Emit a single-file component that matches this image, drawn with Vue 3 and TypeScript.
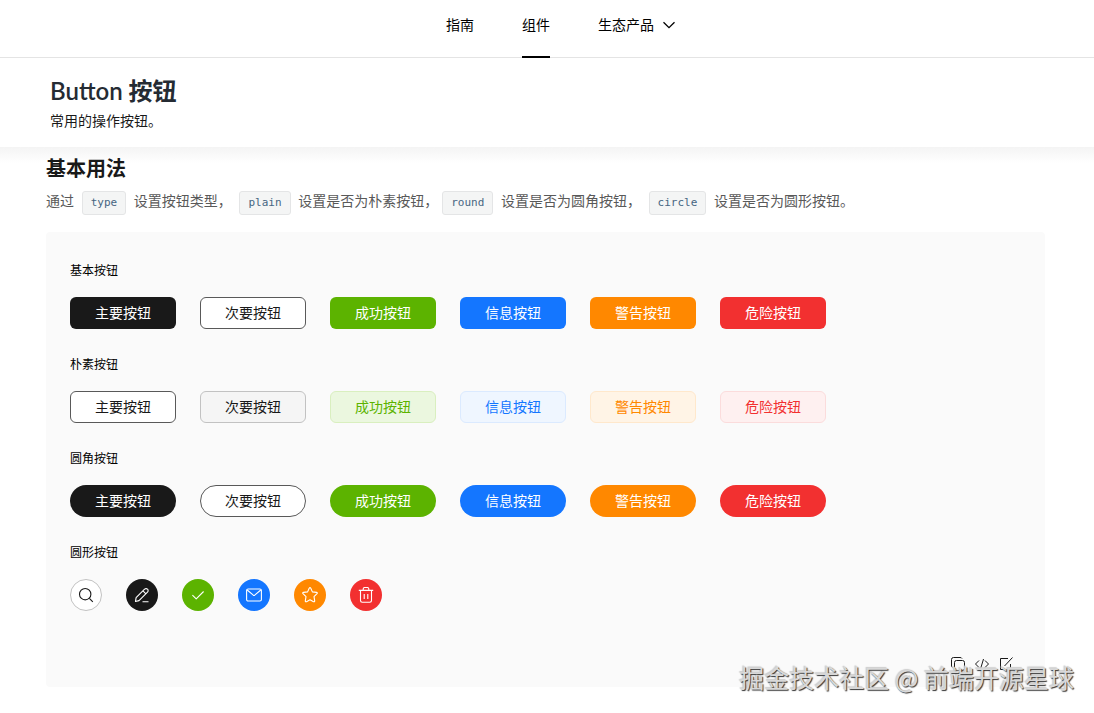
<script setup lang="ts">
type Tone = 'primary' | 'secondary' | 'success' | 'info' | 'warning' | 'danger'

interface ButtonItem {
  tone: Tone
  label: string
}

interface ButtonGroup {
  title: string
  variant: string
}

const buttons: ButtonItem[] = [
  { tone: 'primary', label: '主要按钮' },
  { tone: 'secondary', label: '次要按钮' },
  { tone: 'success', label: '成功按钮' },
  { tone: 'info', label: '信息按钮' },
  { tone: 'warning', label: '警告按钮' },
  { tone: 'danger', label: '危险按钮' },
]

const groups: ButtonGroup[] = [
  { title: '基本按钮', variant: 'solid' },
  { title: '朴素按钮', variant: 'plain' },
  { title: '圆角按钮', variant: 'solid round' },
]
</script>

<template>
  <div class="page">
    <header class="topbar">
      <nav class="nav">
        <a class="nav-link" href="#">指南</a>
        <a class="nav-link active" href="#">组件</a>
        <a class="nav-link" href="#">生态产品
          <svg class="chevron" viewBox="0 0 14 14" aria-hidden="true"><path d="M1.5 4.2 7 9.7l5.5-5.5" /></svg>
        </a>
      </nav>
    </header>

    <section class="intro">
      <h1>Button 按钮</h1>
      <p>常用的操作按钮。</p>
    </section>

    <main class="content">
      <h2>基本用法</h2>
      <p class="desc">通过 <code>type</code> 设置按钮类型， <code>plain</code> 设置是否为朴素按钮，<code>round</code> 设置是否为圆角按钮， <code>circle</code> 设置是否为圆形按钮。</p>

      <div class="demo">
        <section v-for="group in groups" :key="group.title" class="group">
          <h3>{{ group.title }}</h3>
          <div class="row">
            <button v-for="item in buttons" :key="item.tone" type="button" class="btn" :class="[item.tone, group.variant]">{{ item.label }}</button>
          </div>
        </section>

        <section class="group">
          <h3>圆形按钮</h3>
          <div class="row">
            <button type="button" class="btn circle search" aria-label="搜索">
              <svg viewBox="0 0 16 16"><circle cx="7.2" cy="7.2" r="5.7" /><path d="m11.4 11.4 3.4 3.4" /></svg>
            </button>
            <button type="button" class="btn circle solid primary" aria-label="编辑">
              <svg viewBox="0 0 16 16"><path d="m1.5 14.5.6-3.8 8.5-8.5a2 2 0 0 1 2.9 0 2 2 0 0 1 0 2.9L5 13.6zM9 3.9l2.9 2.9M8.5 14.7h6" /></svg>
            </button>
            <button type="button" class="btn circle solid success" aria-label="确认">
              <svg viewBox="0 0 16 16"><path d="m2.4 8.2 3.8 3.7 7.4-7.4" /></svg>
            </button>
            <button type="button" class="btn circle solid info" aria-label="邮件">
              <svg viewBox="0 0 16 16"><rect x=".6" y="2" width="14.8" height="12" rx="1.5" /><path d="m1.2 3 6.1 5.2q.7.5 1.4 0L14.8 3" /></svg>
            </button>
            <button type="button" class="btn circle solid warning" aria-label="收藏">
              <svg viewBox="0 0 16 16"><path d="M7.2 1.2q.8-1.1 1.6 0l1.6 3.7 4.1.5q1.3.3.5 1.3l-3 2.900.7 4.300q0 1.200-1.200.8L8 12.800l-3.500 1.900q-1.200.4-1.200-.8L4 9.600 1 6.700q-.8-1 .5-1.300l4.100-.5z" /></svg>
            </button>
            <button type="button" class="btn circle solid danger" aria-label="删除">
              <svg viewBox="0 0 16 16"><path d="M.8 3.4h14.4M5.2 3.2V2q0-1.5 1.5-1.5h2.6Q10.8.5 10.8 2v1.2M2.5 3.6v10q0 1.7 1.7 1.7h7.6q1.7 0 1.7-1.7v-10M6.2 6.9v5M9.8 6.9v5" /></svg>
            </button>
          </div>
        </section>

        <div class="tools">
          <button type="button" class="tool" aria-label="复制代码">
            <svg viewBox="0 0 14 14"><rect x="3.5" y="3.5" width="10" height="10" rx="2" /><path d="M1.5 10.5Q.5 10 .5 9V2.5q0-2 2-2H9q1.5 0 2 1" /></svg>
          </button>
          <button type="button" class="tool" aria-label="查看代码">
            <svg viewBox="0 0 14 14"><path d="M4 3.5.5 7 4 10.5M10 3.5 13.5 7 10 10.5M8.5 2l-3 10" /></svg>
          </button>
          <button type="button" class="tool" aria-label="在线编辑">
            <svg viewBox="0 0 14 14"><path d="M9 1.5H1.5v11h10V7M13.5.5 5.5 9" /></svg>
          </button>
        </div>
      </div>
    </main>

    <div class="watermark">掘金技术社区 @ 前端开源星球</div>
  </div>
</template>

<style>
body {
  margin: 0;
  background: #fff;
}
</style>

<style scoped>
.page {
  position: relative;
  min-height: 100vh;
  box-sizing: border-box;
  overflow: hidden;
  color: #191919;
  font-family: "Open Sans", "Noto Sans CJK SC", sans-serif;
  font-size: 14px;
  line-height: 20px;
}

h1,
h2,
h3,
p {
  margin: 0;
}

.topbar {
  border-bottom: 1px solid #e4e4e4;
}

.nav {
  display: flex;
  justify-content: center;
  gap: 48px;
  height: 57px;
  padding-left: 28px;
}

.nav-link {
  display: flex;
  gap: 8px;
  height: 41px;
  padding-top: 15px;
  color: #000;
  text-decoration: none;
  border-bottom: 2px solid transparent;
}

.nav-link.active {
  border-bottom-color: #000;
}

.chevron {
  width: 14px;
  height: 14px;
  margin-top: 3px;
  fill: none;
  stroke: #000;
  stroke-width: 1.3;
}

.intro {
  position: relative;
  padding: 16px 50px;
  background: #fff;
}

.intro::after {
  content: "";
  position: absolute;
  top: 100%;
  left: 0;
  right: 0;
  height: 16px;
  background: linear-gradient(#f4f4f4, #fff);
}

.intro h1 {
  color: #252b33;
  font-family: Lato, "Noto Sans CJK SC", sans-serif;
  font-size: 24px;
  font-weight: 600;
  line-height: 34px;
}

.intro p {
  padding-top: 2px;
  line-height: 21px;
}

.content {
  position: relative;
  padding: 8px 49px 26px 46px;
}

.content h2 {
  font-size: 20px;
  font-weight: 700;
  line-height: 28px;
}

.desc {
  margin-top: 4px;
  color: #595959;
  line-height: 28px;
}

code {
  display: inline-block;
  box-sizing: border-box;
  height: 24px;
  margin: 0 4px;
  padding: 0 8px;
  border: 1px solid #e4e5e6;
  border-radius: 3px;
  background: #f4f5f5;
  color: #476582;
  font-family: "DejaVu Sans Mono", monospace;
  font-size: 11px;
  line-height: 22px;
}

.demo {
  margin-top: 17px;
  padding: 30px 24px 16px;
  border-radius: 4px;
  background: #fafafa;
}

.group {
  margin-bottom: 27px;
}

.group h3 {
  margin-bottom: 17px;
  color: #000;
  font-size: 12px;
  font-weight: 400;
  line-height: 18px;
}

.row {
  display: flex;
  gap: 24px;
}

.btn {
  display: flex;
  align-items: center;
  justify-content: center;
  box-sizing: border-box;
  height: 32px;
  padding: 0 24px;
  border: 1px solid transparent;
  border-radius: 6px;
  font: inherit;
  line-height: 20px;
  white-space: nowrap;
  cursor: pointer;
}

.btn.solid {
  color: #fff;
}

.btn.primary {
  background: #191919;
}

.btn.success {
  background: #5cb300;
}

.btn.info {
  background: #1476ff;
}

.btn.warning {
  background: #ff8800;
}

.btn.danger {
  background: #f23030;
}

.btn.secondary {
  border-color: #595959;
  background: #fff;
  color: #191919;
}

.btn.plain.primary {
  border-color: #595959;
  background: #fff;
  color: #191919;
}

.btn.plain.secondary {
  border-color: #c2c2c2;
  background: #f5f5f5;
}

.btn.plain.success {
  border-color: #d9efbf;
  background: #ebf7df;
  color: #5cb300;
}

.btn.plain.info {
  border-color: #dbeaff;
  background: #eff6ff;
  color: #1476ff;
}

.btn.plain.warning {
  border-color: #ffe8cc;
  background: #fff4e6;
  color: #ff8800;
}

.btn.plain.danger {
  border-color: #fbdcdc;
  background: #fef0f0;
  color: #f23030;
}

.btn.round {
  border-radius: 16px;
}

.btn.circle {
  width: 32px;
  padding: 0;
  border-radius: 50%;
}

.btn.search {
  border-color: #c2c2c2;
  background: #fff;
  color: #191919;
}

.btn svg {
  width: 16px;
  height: 16px;
  fill: none;
  stroke: currentColor;
  stroke-width: 1.1;
  stroke-linejoin: round;
}

.tools {
  display: flex;
  justify-content: flex-end;
  gap: 10px;
  margin-top: 46px;
  padding-right: 8px;
}

.tool {
  display: flex;
  padding: 0;
  border: 0;
  background: none;
  color: #191919;
  cursor: pointer;
}

.tool svg {
  width: 14px;
  height: 14px;
  fill: none;
  stroke: currentColor;
}

.watermark {
  position: absolute;
  right: 20px;
  bottom: 18px;
  color: #d8d8d8;
  font-family: "Noto Sans CJK SC", sans-serif;
  font-size: 25px;
  line-height: 36px;
  text-shadow: 1px 1px 1px #333, -1px -1px 1px #ccc;
  white-space: nowrap;
  pointer-events: none;
}
</style>
